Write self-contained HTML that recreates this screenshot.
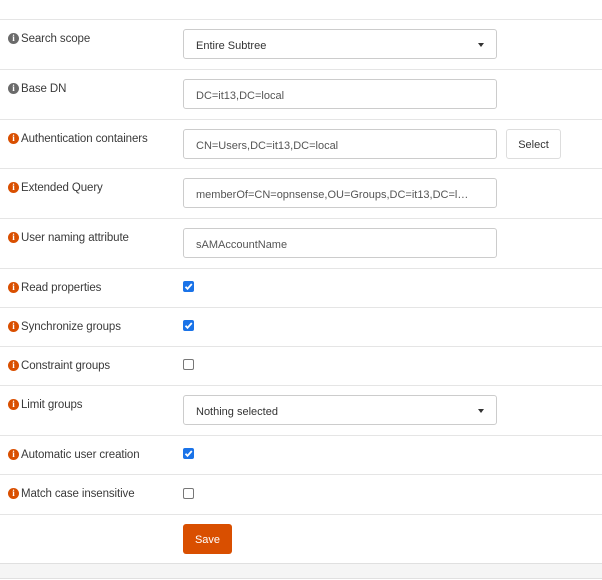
<!DOCTYPE html>
<html><head><style>
*{box-sizing:border-box;margin:0;padding:0}
body{width:602px;height:580px;background:#fff;font-family:"Liberation Sans",sans-serif;font-size:11.5px;color:#3a3a3a;position:relative;overflow:hidden}
.line{position:absolute;left:0;width:602px;height:1px;background:#e5e5e5}
.lab{position:absolute;left:8px;height:16px;line-height:16px;white-space:nowrap;letter-spacing:-0.1px}
.ic{display:inline-block;width:11px;height:11px;border-radius:50%;color:#fff;font-weight:bold;font-size:9px;line-height:11px;text-align:center;vertical-align:-1px;position:relative;top:-2px;margin-right:2px;font-family:"Liberation Serif",serif}
.g{background:#6b6b6b}.o{background:#d94f00}
.inp{position:absolute;left:183px;width:314px;height:30px;border:1px solid #ccc;border-radius:3px;padding-left:12px;padding-top:2px;line-height:28px;font-size:11px;color:#555;white-space:nowrap;overflow:hidden}
.car{position:absolute;right:12px;top:13px;width:0;height:0;border-left:3.5px solid transparent;border-right:3.5px solid transparent;border-top:4px solid #333}
.cb{position:absolute;left:183px;width:11px;height:11px;border-radius:2px}
.on{background:#1a73e8}
.off{border:1px solid #777;background:#fff}
.on svg{position:absolute;left:1px;top:1px}
</style></head><body>
<div class="line" style="top:19px"></div>
<div class="line" style="top:69px"></div>
<div class="line" style="top:119px"></div>
<div class="line" style="top:168px"></div>
<div class="line" style="top:218px"></div>
<div class="line" style="top:268px"></div>
<div class="line" style="top:307px"></div>
<div class="line" style="top:346px"></div>
<div class="line" style="top:385px"></div>
<div class="line" style="top:435px"></div>
<div class="line" style="top:474px"></div>
<div class="line" style="top:514px"></div>
<div style="position:absolute;left:0;top:563px;width:602px;height:16px;background:#f5f5f5;border-top:1px solid #e0e0e0;border-bottom:1px solid #e0e0e0"></div>

<div class="lab" style="top:31px"><span class="ic g">i</span>Search scope</div>
<div class="inp" style="top:29px;color:#333">Entire Subtree<span class="car"></span></div>

<div class="lab" style="top:81px"><span class="ic g">i</span>Base DN</div>
<div class="inp" style="top:79px">DC=it13,DC=local</div>

<div class="lab" style="top:131px"><span class="ic o">i</span>Authentication containers</div>
<div class="inp" style="top:129px">CN=Users,DC=it13,DC=local</div>
<div style="position:absolute;left:506px;top:129px;width:55px;height:30px;border:1px solid #ddd;border-radius:3px;text-align:center;line-height:28px;padding-top:1px;font-size:11px;color:#333">Select</div>

<div class="lab" style="top:180px"><span class="ic o">i</span>Extended Query</div>
<div class="inp" style="top:178px">memberOf=CN=opnsense,OU=Groups,DC=it13,DC=l…</div>

<div class="lab" style="top:230px"><span class="ic o">i</span>User naming attribute</div>
<div class="inp" style="top:228px">sAMAccountName</div>

<div class="lab" style="top:280px"><span class="ic o">i</span>Read properties</div>
<div class="cb on" style="top:281px"><svg width="9" height="9" viewBox="0 0 9 9"><path d="M1.5 4.8L3.5 6.8L7.8 2" stroke="#fff" stroke-width="1.8" fill="none"/></svg></div>

<div class="lab" style="top:319px"><span class="ic o">i</span>Synchronize groups</div>
<div class="cb on" style="top:320px"><svg width="9" height="9" viewBox="0 0 9 9"><path d="M1.5 4.8L3.5 6.8L7.8 2" stroke="#fff" stroke-width="1.8" fill="none"/></svg></div>

<div class="lab" style="top:358px"><span class="ic o">i</span>Constraint groups</div>
<div class="cb off" style="top:359px"></div>

<div class="lab" style="top:397px"><span class="ic o">i</span>Limit groups</div>
<div class="inp" style="top:395px;color:#333">Nothing selected<span class="car"></span></div>

<div class="lab" style="top:447px"><span class="ic o">i</span>Automatic user creation</div>
<div class="cb on" style="top:448px"><svg width="9" height="9" viewBox="0 0 9 9"><path d="M1.5 4.8L3.5 6.8L7.8 2" stroke="#fff" stroke-width="1.8" fill="none"/></svg></div>

<div class="lab" style="top:486px"><span class="ic o">i</span>Match case insensitive</div>
<div class="cb off" style="top:488px"></div>

<div style="position:absolute;left:183px;top:524px;width:49px;height:30px;background:#d94f00;border-radius:3px;color:#fff;text-align:center;line-height:30px;padding-top:1px;font-size:11px">Save</div>
</body></html>
